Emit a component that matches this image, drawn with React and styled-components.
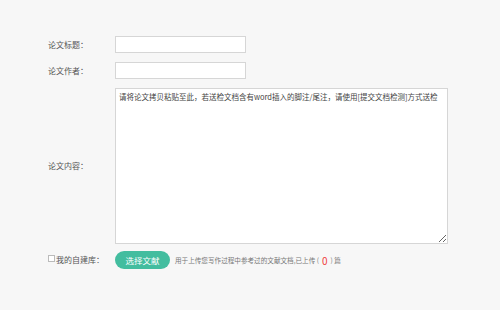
import React from "react";
import styled, { createGlobalStyle } from "styled-components";

const Global = createGlobalStyle`
  html, body { margin: 0; padding: 0; background: #f7f7f7; }
  body { font-family: "Microsoft YaHei", "Noto Sans CJK SC", sans-serif; }
  #root { width: 500px; height: 310px; }
`;

const Form = styled.div`
  display: flex;
  flex-direction: column;
  padding: 36px 0 0 48px;
  gap: 9px;
`;

const Row = styled.div`
  display: flex;
  align-items: center;
  margin-top: ${(p) => p.$mt || 0}px;
`;

const Label = styled.label`
  width: 67px;
  flex: none;
  display: flex;
  align-items: center;
  font-size: 8px;
  color: #555;
  line-height: 1;
`;

const Box = styled.span`
  width: 5px;
  height: 5px;
  border: 1px solid #bbb;
  background: #fff;
  margin-right: 1px;
  margin-top: -3px;
`;

const Input = styled.input`
  box-sizing: border-box;
  width: 131px;
  height: 17px;
  border: 1px solid #d6d6d6;
  background: #fff;
  margin: 0;
  padding: 0 4px;
  outline: none;
`;

const Area = styled.textarea`
  box-sizing: border-box;
  width: 333px;
  height: 156px;
  border: 1px solid #d6d6d6;
  background: #fff;
  margin: 0;
  padding: 3px 3px;
  font-family: "Noto Sans CJK SC", sans-serif;
  font-size: 7.5px;
  line-height: 1.3;
  color: #444;
  resize: both;
  outline: none;
  white-space: nowrap;
  overflow: hidden;
  &::placeholder { color: #444; opacity: 1; }
`;

const Button = styled.button`
  width: 55px;
  height: 18px;
  border: none;
  border-radius: 9px;
  background: #43bd9f;
  color: #fff;
  font-family: "Noto Sans CJK SC", sans-serif;
  font-size: 8.5px;
  padding: 0;
  margin: 0 5px 0 0;
`;

const Hint = styled.span`
  font-size: 6.6px;
  color: #777;
  display: flex;
  align-items: center;
`;

const Count = styled.span`
  color: #f04040;
  font-size: 10px;
  margin: 0 3px;
`;

export default function App() {
  return (
    <>
      <Global />
      <Form>
        <Row>
          <Label>论文标题：</Label>
          <Input />
        </Row>
        <Row>
          <Label>论文作者：</Label>
          <Input />
        </Row>
        <Row>
          <Label>论文内容：</Label>
          <Area placeholder="请将论文拷贝粘贴至此，若送检文档含有word插入的脚注/尾注，请使用[提交文档检测]方式送检" />
        </Row>
        <Row $mt={-2}>
          <Label>
            <Box />
            我的自建库：
          </Label>
          <Button>选择文献</Button>
          <Hint>
            用于上传您写作过程中参考过的文献文档,已上传 (<Count>0</Count>) 篇
          </Hint>
        </Row>
      </Form>
    </>
  );
}
